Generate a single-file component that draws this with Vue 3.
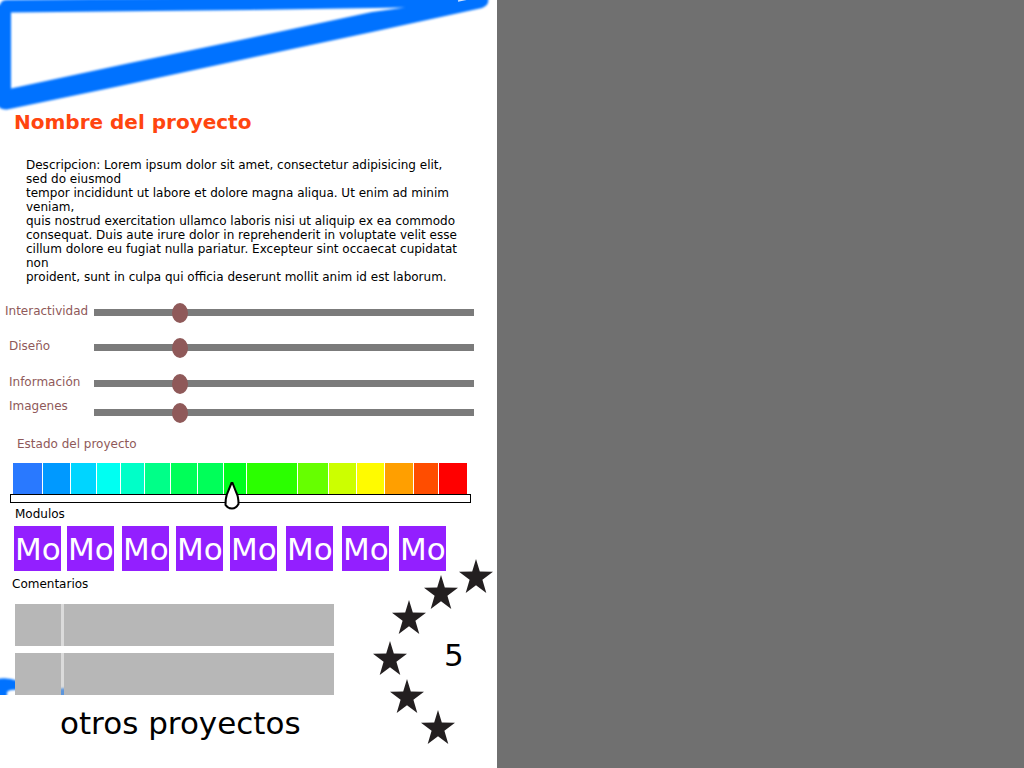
<script setup>
import { ref } from 'vue'

const sliders = ref([
  { id: 'interactividad', label: 'Interactividad', value: 214 },
  { id: 'diseno', label: 'Diseño', value: 214 },
  { id: 'informacion', label: 'Información', value: 214 },
  { id: 'imagenes', label: 'Imagenes', value: 214 },
])

const state = ref(481)

const swatches = [
  { color: '#2979ff', size: 29 },
  { color: '#0099ff', size: 27 },
  { color: '#00d5ff', size: 25 },
  { color: '#00fff2', size: 23 },
  { color: '#00ffc8', size: 23 },
  { color: '#00ff88', size: 25 },
  { color: '#00ff59', size: 26 },
  { color: '#00ff59', size: 25 },
  { color: '#00ff1e', size: 22 },
  { color: '#2bff00', size: 50 },
  { color: '#66ff00', size: 30 },
  { color: '#ccff00', size: 27 },
  { color: '#fffb00', size: 27 },
  { color: '#ff9f00', size: 28 },
  { color: '#ff4d00', size: 24 },
  { color: '#ff0000', size: 28 },
]

const stars = [
  [86, 0],
  [51, 16],
  [19, 41],
  [0, 82],
  [17, 120],
  [48, 151],
]
</script>

<template>
  <div class="page">
    <main class="panel">
      <svg class="banner" viewBox="0 0 497 110" aria-hidden="true">
        <defs>
          <filter id="soft" x="-10%" y="-30%" width="120%" height="160%">
            <feGaussianBlur stdDeviation="1" />
          </filter>
        </defs>
        <path
          filter="url(#soft)"
          fill="#0072ff"
          fill-rule="evenodd"
          d="M0 5 Q1 0 7 0 L260 -3 L488 -3 Q490 5 482 8 L372 32 L250 58 L120 86 L7 109.5 Q0 110 -4 104 L-4 5 Z M11 12.5 L11 88.5 L130 63 L250 38 L372 12 L405 7.5 L250 10 Z"
        />
        <path d="M458 1 L473 -2" stroke="#cfe3ff" stroke-width="1.4" />
      </svg>
      <h1 class="title">Nombre del proyecto</h1>

      <p class="description">
        Descripcion: Lorem ipsum dolor sit amet, consectetur adipisicing elit,<br />
        sed do eiusmod<br />
        tempor incididunt ut labore et dolore magna aliqua. Ut enim ad minim<br />
        veniam,<br />
        quis nostrud exercitation ullamco laboris nisi ut aliquip ex ea commodo<br />
        consequat. Duis aute irure dolor in reprehenderit in voluptate velit esse<br />
        cillum dolore eu fugiat nulla pariatur. Excepteur sint occaecat cupidatat<br />
        non<br />
        proident, sunt in culpa qui officia deserunt mollit anim id est laborum.
      </p>

      <section class="sliders">
        <div v-for="s in sliders" :key="s.id" class="slider-row">
          <label :for="s.id">{{ s.label }}</label>
          <input :id="s.id" v-model="s.value" type="range" min="0" max="1000" />
        </div>
      </section>

      <label class="state-label" for="estado">Estado del proyecto</label>
      <div class="scale">
        <span
          v-for="(s, i) in swatches"
          :key="i"
          class="swatch"
          :style="{ background: s.color, flexGrow: s.size }"
        ></span>
      </div>
      <div class="state">
        <input id="estado" v-model="state" type="range" min="0" max="1000" />
        <svg class="pointer" :style="{ left: state / 10 + '%' }" viewBox="0 0 16 30" aria-hidden="true">
          <path
            d="M7.5 3 L3 14 Q1.5 18 1.5 25 Q4 28.5 8 28.5 Q12 28.5 14.5 24 Q14.5 17 12.5 13 L8.5 3 Z"
            fill="#fff"
            stroke="#000"
            stroke-width="2"
          />
        </svg>
      </div>

      <h2 class="heading modules-heading">Modulos</h2>
      <nav class="modules" aria-label="Modulos">
        <button v-for="n in 8" :key="n" type="button">Mo</button>
      </nav>

      <section class="feedback">
        <h2 class="heading comments-heading">Comentarios</h2>
        <svg class="scribble" viewBox="0 0 70 20" aria-hidden="true">
          <path
            d="M-6 5 Q5 1 18 6 V26 H-6 Z M57 26 V16 Q60 12 68 14 V26 Z"
            fill="#0072ff"
            filter="url(#soft)"
          />
          <path d="M7 24 V17 Q10 14 18 15 V24 Z" fill="#fff" filter="url(#soft)" />
        </svg>
        <ul class="comments">
          <li v-for="n in 2" :key="n">
            <span class="avatar"></span>
            <span class="divider"></span>
            <span class="body"></span>
          </li>
        </ul>
        <div class="rating">
          <svg viewBox="0 0 120 186" aria-hidden="true">
            <path
              v-for="([x, y], i) in stars"
              :key="i"
              :transform="`translate(${x} ${y})`"
              d="M17 0 L20.8 12.6 L34 12.8 L23.4 20.8 L27.3 34 L17 26.3 L6.7 34 L10.6 20.8 L0 12.8 L13.2 12.6 Z"
              fill="#231f20"
            />
          </svg>
          <output class="score">5</output>
        </div>
      </section>

      <footer class="footer"><a href="#otros">otros proyectos</a></footer>
    </main>
    <aside class="backdrop"></aside>
  </div>
</template>

<style>
body {
  margin: 0;
}
</style>

<style scoped>
.page {
  display: grid;
  grid-template-columns: 497fr 527fr;
  min-height: 100vh;
  font: 12px/14px 'DejaVu Sans', sans-serif;
  color: #000;
}
.panel {
  background: #fff;
  min-width: 0;
}
.backdrop {
  background: #707070;
}
.banner {
  display: block;
  width: 100%;
  overflow: visible;
}
.title {
  margin: 0 0 24px 14px;
  font-size: 20px;
  line-height: 24px;
  color: #ff450f;
}
.description {
  margin: 0 0 19px 26px;
  white-space: nowrap;
}
.sliders {
  display: grid;
  grid-template-rows: 35px 36px 24px 25px;
  margin-right: 23px;
  color: #8f5959;
}
.slider-row {
  display: grid;
  grid-template-columns: 94px 1fr;
  align-items: start;
}
.slider-row label {
  padding: 1px 0 0 9px;
  white-space: nowrap;
}
.slider-row:first-child label {
  padding-left: 5px;
}
.slider-row:last-child input {
  align-self: end;
}
.slider-row input {
  appearance: none;
  width: 100%;
  height: 20px;
  margin: 0;
  background: linear-gradient(#7b7b7b, #7b7b7b) 0 6px / 100% 7px no-repeat;
}
.slider-row input::-webkit-slider-thumb {
  appearance: none;
  width: 16px;
  height: 20px;
  border-radius: 50%;
  background: #8f5959;
}
.state-label {
  display: block;
  margin: 14px 0 12px 17px;
  color: #8f5959;
}
.scale {
  display: flex;
  gap: 1px;
  height: 31px;
  margin: 0 30px 0 13px;
}
.swatch {
  flex-basis: 0;
}
.state {
  position: relative;
  height: 9px;
  margin: 0 26px 0 10px;
}
.state input {
  appearance: none;
  display: block;
  box-sizing: border-box;
  width: 100%;
  height: 9px;
  margin: 0;
  border: 1px solid #000;
  background: #fff;
}
.state input::-webkit-slider-thumb {
  appearance: none;
  width: 16px;
  height: 7px;
  background: transparent;
}
.pointer {
  position: absolute;
  bottom: -7px;
  width: 16px;
  height: 30px;
  margin-left: -8px;
  pointer-events: none;
}
.heading {
  margin: 0;
  font-size: 12px;
  font-weight: normal;
}
.modules-heading {
  padding: 4px 0 5px 15px;
}
.modules {
  display: grid;
  grid-template-columns: 53fr 55fr 54fr 54fr 56fr 56fr 57fr 47fr;
  margin: 0 51px 0 14px;
}
.modules button {
  width: 47px;
  height: 45px;
  padding: 2px 0 0 1px;
  border: 0;
  overflow: hidden;
  background: #931fff;
  color: #fff;
  font: 31px/43px 'DejaVu Sans', sans-serif;
  text-align: left;
}
.feedback {
  position: relative;
}
.comments-heading {
  padding: 6px 0 13px 12px;
}
.scribble {
  position: absolute;
  left: 0;
  bottom: 0;
  width: 70px;
  height: 20px;
}
.comments {
  position: relative;
  display: grid;
  gap: 7px;
  margin: 0 163px 0 15px;
  padding: 0;
  list-style: none;
}
.comments li {
  display: grid;
  grid-template-columns: 46px 3px 1fr;
  height: 42px;
}
.avatar,
.body {
  background: #b7b7b7;
}
.divider {
  background: rgba(183, 183, 183, 0.5);
}
.rating {
  position: absolute;
  right: 4px;
  top: -12px;
  width: 120px;
  height: 186px;
}
.rating svg {
  display: block;
  width: 100%;
}
.score {
  position: absolute;
  left: 71px;
  top: 77px;
  font-size: 31px;
  line-height: 38px;
}
.footer {
  padding: 9px 0 16px 60px;
  font-size: 31px;
  line-height: 38px;
}
.footer a {
  color: #000;
  text-decoration: none;
}
</style>
